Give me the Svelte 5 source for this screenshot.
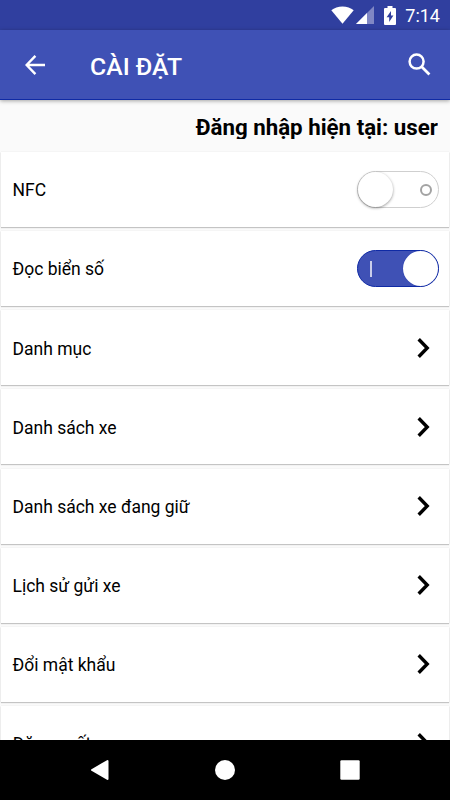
<script>
  // Settings screen: two switches, then links to the sub pages
  let settings = $state([
    { label: 'NFC', type: 'switch', on: false },
    { label: 'Đọc biển số', type: 'switch', on: true },
    { label: 'Danh mục', type: 'link' },
    { label: 'Danh sách xe', type: 'link' },
    { label: 'Danh sách xe đang giữ', type: 'link' },
    { label: 'Lịch sử gửi xe', type: 'link' },
    { label: 'Đổi mật khẩu', type: 'link' },
    { label: 'Đăng xuất', type: 'link' }
  ]);
</script>

<div class="screen">
  <div class="status-bar">
    <svg class="wifi" width="23" height="18" viewBox="0 0 23 18">
      <path d="M0.3 4.2 C6 -0.9 17 -0.9 22.7 4.2 L11.5 17.8 Z" fill="#fff" />
    </svg>
    <svg class="signal" width="18" height="18" viewBox="0 0 18 18">
      <path d="M18 0 V18 H0 Z" fill="#8087c4" />
      <path d="M11 7 V18 H0 Z" fill="#fff" />
    </svg>
    <svg class="battery" width="12" height="19" viewBox="0 0 12 19">
      <path d="M3.5 0 H8.5 V2 H11 Q12 2 12 3 V18 Q12 19 11 19 H1 Q0 19 0 18 V3 Q0 2 1 2 H3.5 Z" fill="#fff" />
      <path d="M7 5 L2.6 11.2 H5.2 V16 L9.4 9.6 H7 Z" fill="#303f9f" />
    </svg>
    <span class="clock">7:14</span>
  </div>

  <header class="app-bar">
    <button class="icon-btn" aria-label="Quay lại">
      <svg width="20" height="20" viewBox="0 0 20 20" fill="none" stroke="#fff" stroke-width="2.4">
        <path d="M20 10 H2 M10.4 0.9 L1.6 10 L10.4 19.1" />
      </svg>
    </button>
    <h1>CÀI ĐẶT</h1>
    <button class="icon-btn" aria-label="Tìm kiếm">
      <svg width="23" height="23" viewBox="0 0 23 23" fill="none" stroke="#fff">
        <circle cx="8.6" cy="8.6" r="7" stroke-width="2.5" />
        <path d="M13.4 13.4 L21.4 21.4" stroke-width="2.8" />
      </svg>
    </button>
  </header>

  <main>
    <p class="account">Đăng nhập hiện tại: user</p>
    <div class="list">
      {#each settings as item}
        <div class="card">
          <span class="label">{item.label}</span>
          {#if item.type === 'switch'}
            <button
              class="switch"
              class:on={item.on}
              role="switch"
              aria-checked={item.on}
              aria-label={item.label}
              onclick={() => (item.on = !item.on)}
            >
              <span class="thumb"></span>
              <span class="mark"></span>
            </button>
          {:else}
            <svg class="chevron" width="13" height="20" viewBox="0 0 13 20" fill="none" stroke="#000" stroke-width="3.4">
              <path d="M1.7 1.3 L10.2 10 L1.7 18.7" />
            </svg>
          {/if}
        </div>
      {/each}
    </div>
  </main>

  <nav>
    <svg width="20" height="22" viewBox="0 0 20 22">
      <path d="M17.5 2 V20 L2 11 Z" fill="#fff" stroke="#fff" stroke-width="2" stroke-linejoin="round" />
    </svg>
    <svg width="22" height="22" viewBox="0 0 22 22">
      <circle cx="11" cy="11" r="10" fill="#fff" />
    </svg>
    <svg width="20" height="20" viewBox="0 0 20 20">
      <rect x="0.3" y="0.3" width="19.4" height="19.4" rx="1.2" fill="#fff" />
    </svg>
  </nav>
</div>

<style>
  :global(body) {
    margin: 0;
    overflow: hidden;
  }
  .screen {
    display: flex;
    flex-direction: column;
    width: 450px;
    height: 800px;
    overflow: hidden;
    background: #fafafa;
    color: #000;
    font-family: Roboto, 'Noto Sans', sans-serif;
  }
  button {
    padding: 0;
    border: 0;
    background: none;
    cursor: pointer;
  }

  .status-bar {
    flex: none;
    display: flex;
    align-items: center;
    justify-content: flex-end;
    height: 30px;
    padding-right: 10px;
    box-sizing: border-box;
    background: #303f9f;
  }
  .signal {
    margin-left: 2px;
  }
  .battery {
    margin-left: 10px;
  }
  .clock {
    margin-left: 9px;
    padding-top: 2px;
    font-size: 18px;
    line-height: 28px;
    color: #fff;
  }

  .app-bar {
    flex: none;
    position: relative;
    z-index: 1;
    display: flex;
    align-items: center;
    height: 70px;
    padding: 0 19px 0 25px;
    box-sizing: border-box;
    background: #3f51b5;
    border-bottom: 1px solid #0f2aa5;
    box-shadow: 0 1px 4px rgba(0, 0, 0, 0.35);
  }
  .icon-btn {
    display: flex;
  }
  h1 {
    flex: 1;
    margin: 4px 0 0 45px;
    font-size: 24.8px;
    font-weight: 500;
    line-height: 36px;
    color: #fff;
  }

  main {
    flex: 1;
    min-height: 0;
    overflow: hidden;
  }
  /* fixed height trims the descenders */
  .account {
    height: 24px;
    margin: 15px 12px 13px;
    overflow: hidden;
    font-size: 22.3px;
    font-weight: 700;
    line-height: 25px;
    text-align: right;
  }
  .list {
    display: flex;
    flex-direction: column;
    gap: 4.15px;
    padding: 0 1px;
  }
  .card {
    flex: none;
    display: flex;
    align-items: center;
    justify-content: space-between;
    height: 75px;
    padding: 0 10.5px 0 11.5px;
    box-sizing: border-box;
    background: #fff;
    box-shadow: 0 1px 1px rgba(0, 0, 0, 0.2), 0 0 1px rgba(0, 0, 0, 0.12);
  }
  .label {
    padding-top: 1.6px;
    font-size: 17.5px;
    line-height: 24px;
  }
  .chevron {
    margin-right: 9px;
  }

  .switch {
    display: flex;
    align-items: center;
    justify-content: space-between;
    width: 82px;
    height: 37px;
    padding: 0 6px 0 0;
    box-sizing: border-box;
    border: 1px solid #cfcfcf;
    border-radius: 19px;
    background: #fff;
  }
  .thumb {
    width: 35px;
    height: 35px;
    border-radius: 50%;
    background: #fff;
    box-shadow: 0 1px 3px rgba(0, 0, 0, 0.4);
  }
  .mark {
    width: 12px;
    height: 12px;
    box-sizing: border-box;
    border: 2px solid #a3a3a3;
    border-radius: 50%;
  }
  .switch.on {
    flex-direction: row-reverse;
    padding: 0 0 0 12px;
    border-color: #0f2aa5;
    background: #3f51b5;
  }
  .on .thumb {
    box-shadow: 0 0 1px #0f2aa5;
  }
  .on .mark {
    width: 2px;
    height: 16px;
    border: 0;
    border-radius: 0;
    background: #c9cdea;
  }

  nav {
    flex: none;
    display: flex;
    align-items: center;
    justify-content: space-between;
    height: 60px;
    padding: 0 90px;
    box-sizing: border-box;
    background: #000;
  }
</style>
